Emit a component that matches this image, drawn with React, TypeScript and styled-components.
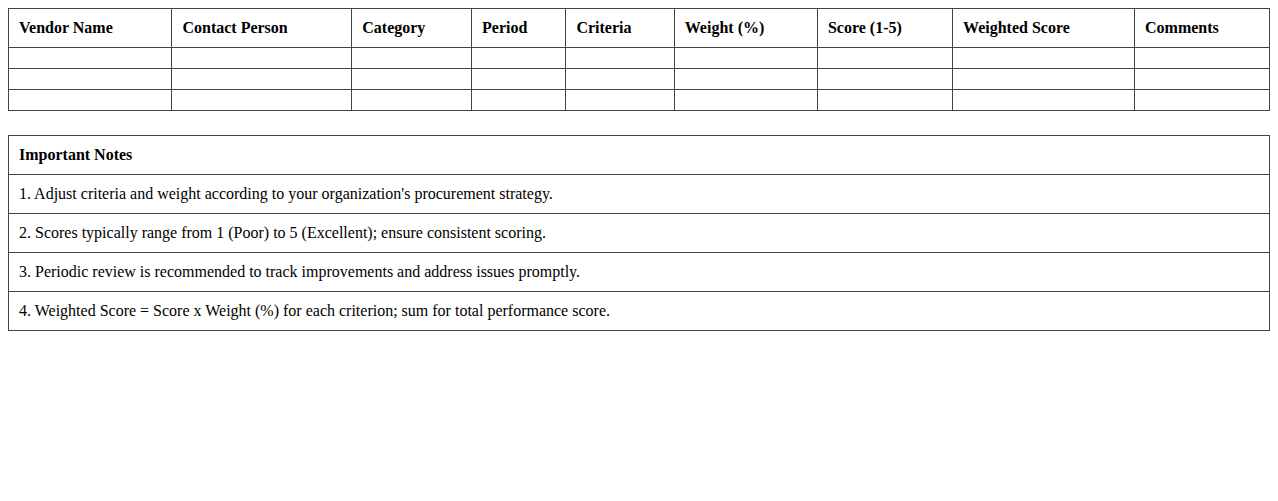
import styled, { createGlobalStyle } from 'styled-components';

const GlobalStyle = createGlobalStyle`
  body {
    margin: 8px;
    font-family: "Liberation Serif", "Times New Roman", serif;
    font-size: 16px;
    color: #000;
    background: #fff;
  }
`;

const Table = styled.table`
  width: 100%;
  border-collapse: collapse;
  font-size: 16px;

  & + & {
    margin-top: 24px;
  }
`;

const HeadCell = styled.th`
  border: 1px solid #444;
  padding: 10px;
  text-align: left;
  font-weight: 700;
`;

const Cell = styled.td`
  border: 1px solid #444;
  padding: 10px;
  text-align: left;
`;

const columns = [
  'Vendor Name',
  'Contact Person',
  'Category',
  'Period',
  'Criteria',
  'Weight (%)',
  'Score (1-5)',
  'Weighted Score',
  'Comments',
];

const notes = [
  "1. Adjust criteria and weight according to your organization's procurement strategy.",
  '2. Scores typically range from 1 (Poor) to 5 (Excellent); ensure consistent scoring.',
  '3. Periodic review is recommended to track improvements and address issues promptly.',
  '4. Weighted Score = Score x Weight (%) for each criterion; sum for total performance score.',
];

const App = () => {
  return (
    <>
      <GlobalStyle />
      <Table>
        <thead>
          <tr>
            {columns.map((col) => (
              <HeadCell key={col}>{col}</HeadCell>
            ))}
          </tr>
        </thead>
        <tbody>
          {[0, 1, 2].map((row) => (
            <tr key={row}>
              {columns.map((col) => (
                <Cell key={col} />
              ))}
            </tr>
          ))}
        </tbody>
      </Table>
      <Table>
        <thead>
          <tr>
            <HeadCell>Important Notes</HeadCell>
          </tr>
        </thead>
        <tbody>
          {notes.map((note) => (
            <tr key={note}>
              <Cell>{note}</Cell>
            </tr>
          ))}
        </tbody>
      </Table>
    </>
  );
};

export default App;
